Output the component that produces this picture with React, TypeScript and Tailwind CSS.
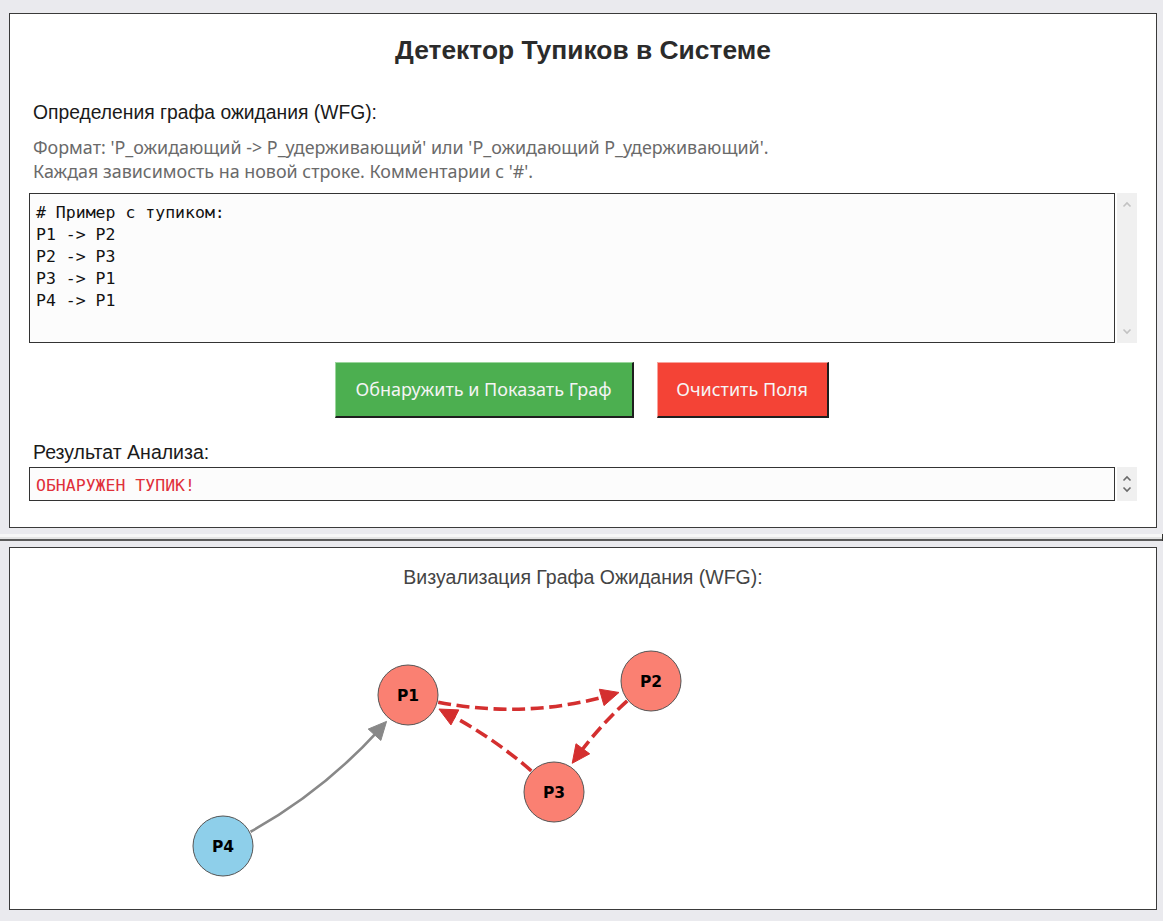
import React from "react";

type Pt = [number, number];

const ARIAL = "font-['Liberation_Sans',Arial,sans-serif]";
const SEGOE = "font-['Noto_Sans','Open_Sans',sans-serif]";
const MONO = "font-['DejaVu_Sans_Mono',monospace]";

function bez(a: Pt, c: Pt, b: Pt, t: number): Pt {
  const u = 1 - t;
  return [u * u * a[0] + 2 * u * t * c[0] + t * t * b[0], u * u * a[1] + 2 * u * t * c[1] + t * t * b[1]];
}
function dist(p: Pt, q: Pt) {
  return Math.hypot(p[0] - q[0], p[1] - q[1]);
}
function solve(f: (t: number) => number, lo: number, hi: number) {
  const flo = f(lo);
  for (let i = 0; i < 50; i++) {
    const m = (lo + hi) / 2;
    const fm = f(m);
    if (Math.sign(fm) === Math.sign(flo)) lo = m;
    else hi = m;
  }
  return (lo + hi) / 2;
}

function Edge({ A, B, k, color, dashed, width }: { A: Pt; B: Pt; k: number; color: string; dashed?: boolean; width: number }) {
  const mid: Pt = [(A[0] + B[0]) / 2, (A[1] + B[1]) / 2];
  const d: Pt = [B[0] - A[0], B[1] - A[1]];
  const C: Pt = [mid[0] - k * d[1], mid[1] + k * d[0]];
  const rA = 31;
  const rB = 34;
  const headLen = 18;
  const headW = 17;
  const t0 = solve((t) => dist(bez(A, C, B, t), A) - rA, 0, 0.5);
  const t1 = solve((t) => dist(bez(A, C, B, t), B) - rB, 0.5, 1);
  const tip = bez(A, C, B, t1);
  const t2 = solve((t) => dist(bez(A, C, B, t), tip) - headLen, t1, t0);
  const base = bez(A, C, B, t2);
  const ux = (tip[0] - base[0]) / headLen;
  const uy = (tip[1] - base[1]) / headLen;
  const px = -uy;
  const py = ux;
  const ta = t0;
  const tb = t2 + (t1 - t2) * 0.3;
  const s = bez(A, C, B, ta);
  const e = bez(A, C, B, tb);
  const q: Pt = [
    (1 - ta) * (1 - tb) * A[0] + ((1 - ta) * tb + ta * (1 - tb)) * C[0] + ta * tb * B[0],
    (1 - ta) * (1 - tb) * A[1] + ((1 - ta) * tb + ta * (1 - tb)) * C[1] + ta * tb * B[1],
  ];
  const head = `${tip[0]},${tip[1]} ${base[0] + (px * headW) / 2},${base[1] + (py * headW) / 2} ${base[0] - (px * headW) / 2},${base[1] - (py * headW) / 2}`;
  return (
    <g>
      <path
        d={`M${s[0]},${s[1]} Q${q[0]},${q[1]} ${e[0]},${e[1]}`}
        fill="none"
        stroke={color}
        strokeWidth={width}
        strokeDasharray={dashed ? "13 5.6" : undefined}
      />
      <polygon points={head} fill={color} stroke={color} strokeWidth={1} />
    </g>
  );
}

function Node({ p, label, fill }: { p: Pt; label: string; fill: string }) {
  return (
    <g>
      <circle cx={p[0]} cy={p[1]} r={30} fill={fill} stroke="#555" strokeWidth={1} />
      <text
        x={p[0]}
        y={p[1] + 5.5}
        textAnchor="middle"
        fontFamily="'DejaVu Sans', sans-serif"
        fontWeight="bold"
        fontSize="15.5"
        fill="#000"
      >
        {label}
      </text>
    </g>
  );
}

function Chevron({ up, color }: { up: boolean; color: string }) {
  return (
    <svg width="10" height="7" viewBox="0 0 10 7">
      <polyline
        points={up ? "1.5,5.5 5,2 8.5,5.5" : "1.5,1.5 5,5 8.5,1.5"}
        fill="none"
        stroke={color}
        strokeWidth="1.6"
      />
    </svg>
  );
}

export default function App() {
  const P1: Pt = [408, 695];
  const P2: Pt = [651, 681];
  const P3: Pt = [554, 792];
  const P4: Pt = [223, 846];
  const red = "#d42f2f";
  return (
    <div className="w-[1163px] h-[921px] bg-[#eaeaee] pt-[13px] flex flex-col overflow-hidden">
      {/* top panel */}
      <div className="mx-[9px] w-[1148px] h-[515px] border border-[#3a3a3a] bg-white flex flex-col px-[19px]">
        <div className={`${ARIAL} text-[26.4px] leading-[30px] font-bold text-[#2b2b2b] text-center mt-[21px]`}>
          Детектор Тупиков в Системе
        </div>
        <div className={`${ARIAL} text-[19.3px] leading-[22px] text-[#1a1a1a] mt-[37px] pl-[4px]`}>
          Определения графа ожидания (WFG):
        </div>
        <div className={`${SEGOE} text-[17.9px] leading-[24px] text-[#6a6a6a] mt-[11px] pl-[4px]`}>
          <div>Формат: 'P_ожидающий -&gt; P_удерживающий' или 'P_ожидающий P_удерживающий'.</div>
          <div>Каждая зависимость на новой строке. Комментарии с '#'.</div>
        </div>
        <div className="flex mt-[10px] gap-[2px]">
          <div
            className={`${MONO} flex-1 h-[150px] border border-[#333] bg-[#fcfcfc] pt-[8px] pl-[6px] text-[16.5px] leading-[22px] text-[#111] whitespace-pre`}
          >
            {"# Пример с тупиком:\nP1 -> P2\nP2 -> P3\nP3 -> P1\nP4 -> P1"}
          </div>
          <div className="w-[20px] h-[150px] bg-[#f0f0f0] flex flex-col items-center justify-between py-[8px]">
            <Chevron up color="#c2c2c2" />
            <Chevron up={false} color="#c2c2c2" />
          </div>
        </div>
        <div className="flex justify-center gap-[23px] mt-[19px] pr-[3px]">
          <div
            className={`${SEGOE} w-[299px] h-[56px] bg-[#4caf50] border-t border-l border-r-2 border-b-2 border-t-[#9bd69d] border-l-[#9bd69d] border-r-[#1e1e1e] border-b-[#1e1e1e] flex items-center justify-center text-[18px] text-[#f4f4f4]`}
          >
            Обнаружить и Показать Граф
          </div>
          <div
            className={`${SEGOE} w-[172px] h-[56px] bg-[#f44336] border-t border-l border-r-2 border-b-2 border-t-[#f8a39c] border-l-[#f8a39c] border-r-[#1e1e1e] border-b-[#1e1e1e] flex items-center justify-center text-[18px] text-[#f6f6f6]`}
          >
            Очистить Поля
          </div>
        </div>
        <div className={`${ARIAL} text-[19.5px] leading-[22px] text-[#1a1a1a] mt-[23px] pl-[4px]`}>Результат Анализа:</div>
        <div className="flex mt-[4px] gap-[2px]">
          <div
            className={`${MONO} flex-1 h-[34px] border border-[#333] bg-[#fcfcfc] pl-[6px] pt-[7px] text-[16.5px] leading-[22px] text-[#e0303a]`}
          >
            ОБНАРУЖЕН ТУПИК!
          </div>
          <div className="w-[20px] h-[34px] bg-[#f0f0f0] flex flex-col items-center justify-center gap-[4px]">
            <Chevron up color="#6a6a6a" />
            <Chevron up={false} color="#6a6a6a" />
          </div>
        </div>
      </div>

      {/* sash */}
      <div className="mt-[6px] h-[7px] w-[1163px] flex">
        <div className="flex-1 border-t-[3px] border-t-[#f7f7f7] border-b-2 border-b-[#5a5a5a] bg-[#e4e4e4]" />
        <div className="w-[1px] bg-[#333]" />
      </div>

      {/* bottom panel */}
      <div className="mx-[9px] mt-[6px] w-[1148px] h-[363px] border border-[#3a3a3a] bg-white flex flex-col">
        <div className={`${ARIAL} text-[19.5px] leading-[22px] text-[#444] text-center mt-[18px]`}>
          Визуализация Графа Ожидания (WFG):
        </div>
        <svg width="1146" height="300" viewBox="10 600 1146 300" className="mt-[12px] shrink-0">
          <Edge A={P4} B={P1} k={0.12} color="#888" width={2.6} />
          <Edge A={P1} B={P2} k={0.17} color={red} width={3.6} dashed />
          <Edge A={P2} B={P3} k={0.1} color={red} width={3.6} dashed />
          <Edge A={P3} B={P1} k={0.1} color={red} width={3.6} dashed />
          <Node p={P1} label="P1" fill="#fa8072" />
          <Node p={P2} label="P2" fill="#fa8072" />
          <Node p={P3} label="P3" fill="#fa8072" />
          <Node p={P4} label="P4" fill="#8ecfea" />
        </svg>
      </div>
    </div>
  );
}
